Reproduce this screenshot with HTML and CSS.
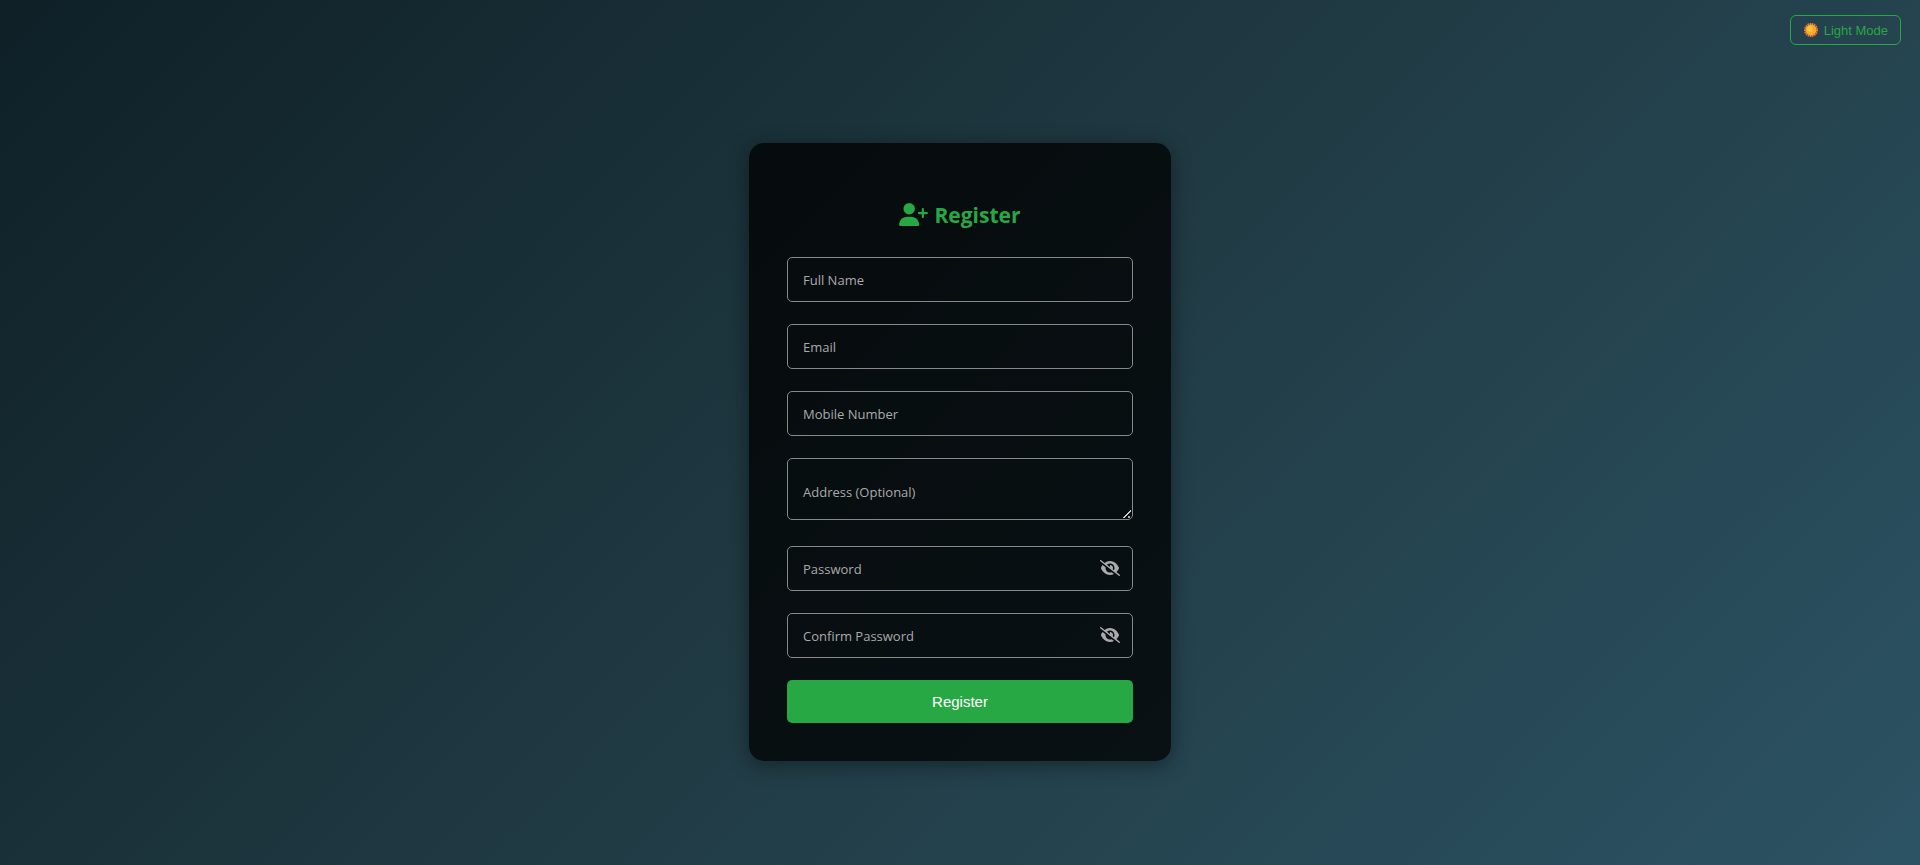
FILE: index.html
```html
<!DOCTYPE html>
<html lang="en">
<head>
<meta charset="utf-8">
<meta name="viewport" content="width=device-width, initial-scale=1">
<title>Register</title>
<link rel="stylesheet" href="styles.css">
</head>
<body>
<svg class="sprite" aria-hidden="true">
  <symbol id="eye-slash" viewBox="0 0 640 512"><path d="M38.8 5.1C28.4-3.1 13.3-1.2 5.1 9.2S-1.2 34.7 9.2 42.9l592 464c10.4 8.2 25.5 6.3 33.7-4.1s6.3-25.5-4.1-33.7L525.6 386.7c39.6-40.6 66.4-86.1 79.9-118.4c3.3-7.9 3.3-16.7 0-24.6c-14.9-35.7-46.2-87.7-93-131.1C465.5 68.8 400.8 32 320 32c-68.2 0-125 26.3-169.3 60.8L38.8 5.1zM223.1 149.5C248.6 126.2 282.7 112 320 112c79.500 0 144 64.500 144 144c0 24.900-6.300 48.300-17.400 68.700L408 294.500c8.400-19.300 10.600-41.400 4.800-63.300c-11.100-41.500-47.800-69.400-88.600-71.100c-5.800-.2-9.200 6.100-7.400 11.700c2.100 6.400 3.300 13.200 3.300 20.300c0 10.200-2.400 19.800-6.600 28.300l-90.300-70.800zM373 389.900c-16.400 6.500-34.300 10.100-53 10.100c-79.500 0-144-64.500-144-144c0-6.900 .5-13.600 1.400-20.200L83.100 161.500C60.300 191.200 44 220.800 34.500 243.700c-3.300 7.900-3.300 16.700 0 24.600c14.900 35.700 46.200 87.700 93 131.100C174.500 443.200 239.200 480 320 480c47.800 0 89.900-12.900 126.200-32.500L373 389.900z"/></symbol>
</svg>
<button class="mode" type="button">
  <svg class="sun" viewBox="0 0 26 26" aria-hidden="true">
    <circle class="sun-rays" cx="13" cy="13" r="11"/>
    <circle class="sun-disc" cx="13" cy="13" r="10"/>
    <circle class="sun-glow" cx="11" cy="11" r="5"/>
  </svg>
  Light Mode
</button>
<main class="page">
  <form class="card">
    <h1 class="title">
      <svg class="title-icon" viewBox="0 0 640 512" aria-hidden="true"><path d="M96 128a128 128 0 1 1 256 0A128 128 0 1 1 96 128zM0 482.300C0 383.800 79.800 304 178.300 304h91.400C368.200 304 448 383.800 448 482.300c0 16.400-13.300 29.700-29.700 29.700H29.700C13.300 512 0 498.700 0 482.300zM504 312V248H440c-13.300 0-24-10.700-24-24s10.700-24 24-24h64V136c0-13.300 10.700-24 24-24s24 10.700 24 24v64h64c13.300 0 24 10.700 24 24s-10.700 24-24 24H552v64c0 13.300-10.700 24-24 24s-24-10.700-24-24z"/></svg>
      Register
    </h1>
    <div class="field">
      <input class="control" id="name" type="text">
      <label class="label" for="name">Full Name</label>
    </div>
    <div class="field">
      <input class="control" id="email" type="email">
      <label class="label" for="email">Email</label>
    </div>
    <div class="field">
      <input class="control" id="mobile" type="tel">
      <label class="label" for="mobile">Mobile Number</label>
    </div>
    <div class="field field-area">
      <textarea class="control area" id="address"></textarea>
      <label class="label" for="address">Address (Optional)</label>
    </div>
    <div class="field">
      <input class="control" id="password" type="password">
      <label class="label" for="password">Password</label>
      <button class="reveal" type="button" aria-label="Show password"><svg class="eye"><use href="#eye-slash"/></svg></button>
    </div>
    <div class="field">
      <input class="control" id="confirm" type="password">
      <label class="label" for="confirm">Confirm Password</label>
      <button class="reveal" type="button" aria-label="Show confirmed password"><svg class="eye"><use href="#eye-slash"/></svg></button>
    </div>
    <button class="submit" type="submit">Register</button>
  </form>
</main>
</body>
</html>
```
FILE: styles.css
```css
* { box-sizing: border-box; }

body {
  margin: 0;
  min-height: 100vh;
  background: linear-gradient(135deg, #0f2027, #203a43, #2c5364);
  font-family: "Segoe UI", "Open Sans", sans-serif;
  color: #fff;
}

.sprite { display: none; }

.page {
  display: flex;
  flex-direction: column;
  align-items: center;
  justify-content: center;
  min-height: 100vh;
  padding: 38px 16px 0;
}

.mode {
  position: absolute;
  top: 15px;
  right: 19px;
  display: flex;
  align-items: center;
  gap: 6px;
  height: 30px;
  padding: 0 12px 0 13px;
  border: 1px solid #28a745;
  border-radius: 6px;
  background: transparent;
  color: #28a745;
  font: 13px "Liberation Sans", Arial, sans-serif;
  cursor: pointer;
}

.sun { width: 14px; height: 14px; }
.sun-rays { fill: none; stroke: #f4772e; stroke-width: 4; stroke-dasharray: 3 1; }
.sun-disc { fill: #fbab2c; }
.sun-glow { fill: #ffc83d; }

.card {
  width: 100%;
  max-width: 422px;
  padding: 38px;
  border-radius: 15px;
  background: rgba(0, 0, 0, 0.75);
  box-shadow: 0 4px 20px rgba(0, 0, 0, 0.4);
}

.title {
  display: flex;
  align-items: center;
  justify-content: center;
  gap: 6px;
  margin: 18px 0 26px;
  color: #28a745;
  font-size: 21px;
  line-height: 32px;
}

.title-icon { width: 29px; height: 23px; fill: currentColor; }

.field {
  position: relative;
  margin-bottom: 22px;
}

.field-area { margin-bottom: 26px; }

.control {
  display: block;
  width: 100%;
  height: 45px;
  padding: 12px 16px;
  border: 1px solid #888;
  border-radius: 5px;
  outline: none;
  background: transparent;
  color: #fff;
  font: 15px "Segoe UI", "Open Sans", sans-serif;
}

.area { height: 62px; resize: vertical; }

.area::-webkit-resizer {
  background:
    linear-gradient(135deg, transparent 5px, #ccc 5px, #ccc 7px, transparent 7px) 6px 6px / 8px 8px no-repeat,
    linear-gradient(#aaa, #aaa) 11px 12px / 2px 2px no-repeat;
}

.label {
  position: absolute;
  top: 0;
  bottom: 0;
  left: 16px;
  display: flex;
  align-items: center;
  padding-top: 1px;
  color: #aaa;
  font-size: 13px;
  pointer-events: none;
}

.field-area .label { padding-top: 6px; }

.reveal {
  position: absolute;
  top: 0;
  right: 13px;
  bottom: 0;
  display: flex;
  align-items: center;
  padding: 0;
  border: 0;
  background: none;
  color: #aaa;
  cursor: pointer;
}

.eye { width: 20px; height: 16px; fill: currentColor; }

.submit {
  display: block;
  width: 100%;
  height: 43px;
  border: 0;
  border-radius: 5px;
  background: #28a745;
  color: #fff;
  font: 15px "Liberation Sans", Arial, sans-serif;
  cursor: pointer;
}
```
